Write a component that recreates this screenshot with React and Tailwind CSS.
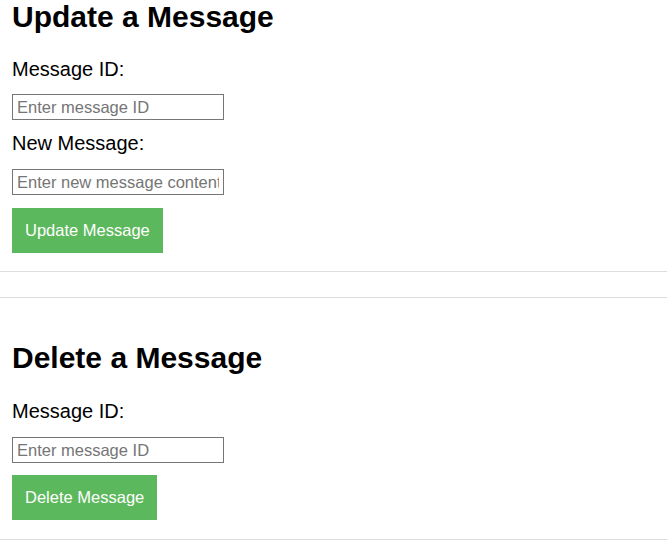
import { useState } from 'react';

/* ---------- Shared bits ---------- */
function TextInput({ value, onChange, placeholder, className = '' }) {
  return (
    <input
      type="text"
      value={value}
      onChange={(e) => onChange(e.target.value)}
      placeholder={placeholder}
      className={`block w-[212px] h-[26px] border border-[#767676] px-[4px] text-[16.5px] text-black placeholder:text-[#757575] outline-none ${className}`}
    />
  );
}

function Label({ children, className = '' }) {
  return <label className={`block text-[20px] leading-[23px] ${className}`}>{children}</label>;
}

function GreenButton({ children, className = '' }) {
  return (
    <button
      type="button"
      className={`block bg-[#5cb85c] text-white text-[16.5px] leading-[19px] py-[13px] px-[13px] ${className}`}
    >
      {children}
    </button>
  );
}

export default function App() {
  const [updateId, setUpdateId] = useState('');
  const [newText, setNewText] = useState('');
  const [deleteId, setDeleteId] = useState('');

  return (
    <div className="min-h-screen bg-white text-black font-['Liberation_Sans',Arial,sans-serif]">
      {/* ── Update ── */}
      <section className="px-3 pb-[18px] border-b border-[#dddddd]">
        <h2 className="text-[30px] leading-[34px] font-bold">Update a Message</h2>
        <Label className="mt-[24px]">Message ID:</Label>
        <TextInput className="mt-[13px]" value={updateId} onChange={setUpdateId} placeholder="Enter message ID" />
        <Label className="mt-[12px]">New Message:</Label>
        <TextInput className="mt-[14px]" value={newText} onChange={setNewText} placeholder="Enter new message content" />
        <GreenButton className="mt-[13px]">Update Message</GreenButton>
      </section>

      <hr className="mt-[25px] border-[#dddddd]" />

      {/* ── Delete ── */}
      <section className="px-3 pt-[43px] pb-[19px] border-b border-[#dddddd]">
        <h2 className="text-[30px] leading-[34px] font-bold">Delete a Message</h2>
        <Label className="mt-[25px]">Message ID:</Label>
        <TextInput className="mt-[14px]" value={deleteId} onChange={setDeleteId} placeholder="Enter message ID" />
        <GreenButton className="mt-[12px]">Delete Message</GreenButton>
      </section>
    </div>
  );
}
